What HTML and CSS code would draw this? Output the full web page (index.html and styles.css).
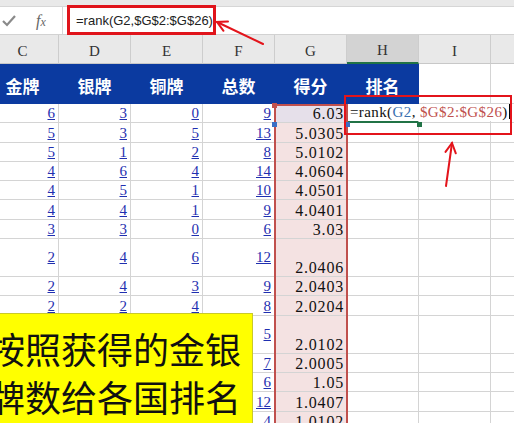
FILE: index.html
```html
<!DOCTYPE html>
<html lang="zh-CN">
<head>
    <meta charset="UTF-8">
    <title>rank 排名</title>
    <link rel="stylesheet" href="styles.css">
</head>
<body>
<div class="app">
    <div class="topstrip"></div>
    <div class="fbar">
        <div class="fb-icons">
            <svg class="check" width="14" height="12" viewBox="0 0 14 12"><polyline points="1,6 5,10 13,1" fill="none" stroke="#8a8a8a" stroke-width="2.2"/></svg>
            <span class="fx">f<span class="fx-x">x</span></span>
        </div>
        <div class="fb-input">
            <span class="fb-formula">=rank(G2,$G$2:$G$26)</span>
        </div>
    </div>

    <div class="sheet">
        <div class="row colhead">
            <div class="c">C</div><div class="c">D</div><div class="c">E</div><div class="c">F</div>
            <div class="c">G</div><div class="c sel">H</div><div class="c">I</div><div class="c"></div>
        </div>
        <div class="row titles">
            <div class="c t">金牌</div><div class="c t">银牌</div><div class="c t">铜牌</div><div class="c t">总数</div>
            <div class="c t">得分</div><div class="c t">排名</div><div class="c"></div><div class="c"></div>
        </div>

        <div class="row r">
            <div class="c n"><u>6</u></div><div class="c n"><u>3</u></div><div class="c n"><u>0</u></div><div class="c n"><u>9</u></div>
            <div class="c g active">6.03</div>
            <div class="c h2"><span class="edit">=rank(<span class="ref-b">G2</span>, <span class="ref-r">$G$2:$G$26</span>)<span class="caret"></span></span></div>
            <div class="c"></div><div class="c"></div>
        </div>
        <div class="row r">
            <div class="c n"><u>5</u></div><div class="c n"><u>3</u></div><div class="c n"><u>5</u></div><div class="c n"><u>13</u></div>
            <div class="c g">5.0305</div><div class="c"></div><div class="c"></div><div class="c"></div>
        </div>
        <div class="row r">
            <div class="c n"><u>5</u></div><div class="c n"><u>1</u></div><div class="c n"><u>2</u></div><div class="c n"><u>8</u></div>
            <div class="c g">5.0102</div><div class="c"></div><div class="c"></div><div class="c"></div>
        </div>
        <div class="row r">
            <div class="c n"><u>4</u></div><div class="c n"><u>6</u></div><div class="c n"><u>4</u></div><div class="c n"><u>14</u></div>
            <div class="c g">4.0604</div><div class="c"></div><div class="c"></div><div class="c"></div>
        </div>
        <div class="row r">
            <div class="c n"><u>4</u></div><div class="c n"><u>5</u></div><div class="c n"><u>1</u></div><div class="c n"><u>10</u></div>
            <div class="c g">4.0501</div><div class="c"></div><div class="c"></div><div class="c"></div>
        </div>
        <div class="row r">
            <div class="c n"><u>4</u></div><div class="c n"><u>4</u></div><div class="c n"><u>1</u></div><div class="c n"><u>9</u></div>
            <div class="c g">4.0401</div><div class="c"></div><div class="c"></div><div class="c"></div>
        </div>
        <div class="row r">
            <div class="c n"><u>3</u></div><div class="c n"><u>3</u></div><div class="c n"><u>0</u></div><div class="c n"><u>6</u></div>
            <div class="c g">3.03</div><div class="c"></div><div class="c"></div><div class="c"></div>
        </div>
        <div class="row r tall">
            <div class="c n"><u>2</u></div><div class="c n"><u>4</u></div><div class="c n"><u>6</u></div><div class="c n"><u>12</u></div>
            <div class="c g">2.0406</div><div class="c"></div><div class="c"></div><div class="c"></div>
        </div>
        <div class="row r">
            <div class="c n"><u>2</u></div><div class="c n"><u>4</u></div><div class="c n"><u>3</u></div><div class="c n"><u>9</u></div>
            <div class="c g">2.0403</div><div class="c"></div><div class="c"></div><div class="c"></div>
        </div>
        <div class="row r">
            <div class="c n"><u>2</u></div><div class="c n"><u>2</u></div><div class="c n"><u>4</u></div><div class="c n"><u>8</u></div>
            <div class="c g">2.0204</div><div class="c"></div><div class="c"></div><div class="c"></div>
        </div>
        <div class="row r tall">
            <div class="c n"><u>2</u></div><div class="c n"><u>1</u></div><div class="c n"><u>2</u></div><div class="c n"><u>5</u></div>
            <div class="c g">2.0102</div><div class="c"></div><div class="c"></div><div class="c"></div>
        </div>
        <div class="row r">
            <div class="c n"><u>2</u></div><div class="c n"><u>0</u></div><div class="c n"><u>5</u></div><div class="c n"><u>7</u></div>
            <div class="c g">2.0005</div><div class="c"></div><div class="c"></div><div class="c"></div>
        </div>
        <div class="row r">
            <div class="c n"><u>1</u></div><div class="c n"><u>5</u></div><div class="c n"><u>0</u></div><div class="c n"><u>6</u></div>
            <div class="c g">1.05</div><div class="c"></div><div class="c"></div><div class="c"></div>
        </div>
        <div class="row r">
            <div class="c n"><u>1</u></div><div class="c n"><u>4</u></div><div class="c n"><u>7</u></div><div class="c n"><u>12</u></div>
            <div class="c g">1.0407</div><div class="c"></div><div class="c"></div><div class="c"></div>
        </div>
        <div class="row r">
            <div class="c n"><u>1</u></div><div class="c n"><u>1</u></div><div class="c n"><u>2</u></div><div class="c n"><u>4</u></div>
            <div class="c g">1.0102</div><div class="c"></div><div class="c"></div><div class="c"></div>
        </div>
    </div>

    <!-- range highlight of $G$2:$G$26 -->
    <div class="range-g"></div>
    <div class="hd hd-red" style="left:272px; top:103px"></div>
    <div class="hd hd-blue" style="left:272px; top:122px"></div>
    <div class="hd hd-blue" style="left:345px; top:122px"></div>
    <div class="hd hd-green" style="left:417px; top:122px"></div>

    <!-- annotations -->
    <div class="h2-box"></div>
    <div class="note">按照获得的金银<br>牌数给各国排名</div>
    <svg class="arrows" width="514" height="423" viewBox="0 0 514 423">
        <g stroke="#e3141b" stroke-width="2" fill="none" stroke-linecap="round">
            <line x1="263" y1="44" x2="217" y2="22"/>
            <polyline points="223.5,30.8 217,22 228,21.5"/>
            <line x1="446" y1="186" x2="452" y2="143"/>
            <polyline points="445.5,151.9 452,143 455.8,153.3"/>
        </g>
    </svg>
</div>
</body>
</html>
```

FILE: styles.css
```css
* {
    box-sizing: border-box;
}
body {
    margin: 0;
    width: 514px;
    height: 423px;
    overflow: hidden;
    background: #fff;
    font-family: "Liberation Serif", serif;
}
.app {
    position: relative;
    width: 514px;
    height: 423px;
    overflow: hidden;
}

/* formula bar */
.topstrip {
    height: 7px;
    background: #e9e9e9;
    border-bottom: 1px solid #d6d6d6;
}
.fbar {
    display: flex;
    height: 28px;
    border-bottom: 1px solid #d2d2d2;
}
.fb-icons {
    width: 63px;
    display: flex;
    align-items: center;
    padding-left: 2px;
    border-right: 1px solid #d6d6d6;
}
.check {
    margin-top: 1px;
}
.fx {
    margin-left: 20px;
    font-style: italic;
    font-size: 16px;
    color: #666;
}
.fx-x {
    font-size: 12px;
}
.fb-input {
    flex: 1;
    padding-left: 4px;
    display: flex;
}
.fb-formula {
    width: 149px;
    height: 30px;
    margin-top: -2px;
    border: 3px solid #e0141b;
    padding-left: 6px;
    display: flex;
    align-items: center;
    font: 13px "Liberation Sans", Arial, sans-serif;
    color: #222;
}

/* sheet grid */
.sheet {
    margin-left: -13px;
}
.row {
    display: grid;
    grid-template-columns: repeat(7, 72px) 80px;
}
.c {
    display: flex;
    border-right: 1px solid #d4d4d4;
    border-bottom: 1px solid #d4d4d4;
}
.colhead {
    height: 29px;
    background: #e9e9e9;
}
.colhead .c {
    justify-content: center;
    align-items: flex-end;
    padding-bottom: 3px;
    font-size: 15px;
    color: #333;
    border-right-color: #cdcdcd;
    border-bottom-color: #c8c8c8;
}
.colhead .c.sel {
    background: #d3d3d3;
    border-bottom: 2px solid #217346;
}
.titles {
    height: 40px;
}
.titles .c.t {
    background: #0b3aa0;
    border-color: #0b3aa0;
    color: #fff;
    justify-content: center;
    align-items: center;
    padding-top: 3px;
    font: bold 17px "Noto Sans CJK SC", sans-serif;
}
.r {
    height: 19.3px;
}
.r.tall {
    height: 38px;
}
.r .c {
    align-items: flex-end;
    line-height: 17px;
}
.n {
    justify-content: flex-end;
    padding-right: 3px;
    font-size: 15px;
    color: #1f2fb0;
}
.r.tall .n {
    align-items: center;
}
.g {
    justify-content: flex-end;
    padding-right: 2px;
    font-size: 16px;
    letter-spacing: 0.8px;
    color: #111;
    background: #f4e2e2;
}
.g.active {
    background: #e6e0ea;
}
.h2 {
    overflow: visible;
    white-space: nowrap;
    padding-left: 3px;
    border-bottom: 2px solid #217346;
}
.edit {
    position: relative;
    z-index: 1;
    background: #fff;
    font-size: 15px;
    letter-spacing: 0.4px;
    color: #111;
    padding-right: 2px;
}
.ref-b {
    color: #3a6fb0;
}
.ref-r {
    color: #c0504d;
}
.caret {
    display: inline-block;
    width: 1px;
    height: 15px;
    margin-left: 1px;
    vertical-align: -2px;
    background: #000;
}

/* overlays */
.range-g {
    position: absolute;
    left: 274px;
    top: 104px;
    width: 74px;
    height: 330px;
    border: 2px solid #c0504d;
    border-bottom: none;
}
.hd {
    position: absolute;
    width: 5px;
    height: 5px;
}
.hd-red { background: #c0504d; }
.hd-blue { background: #3a6fc4; }
.hd-green { background: #217346; }
.h2-box {
    position: absolute;
    left: 344px;
    top: 95px;
    width: 168px;
    height: 40px;
    border: 2px solid #e3141b;
    z-index: 2;
}
.note {
    position: absolute;
    left: -14px;
    top: 313px;
    width: 267px;
    height: 120px;
    padding: 10px 0 0 2px;
    background: #ffff00;
    border: 1px solid #c9c92a;
    font: 36px/48px "Noto Sans CJK SC", sans-serif;
    color: #111;
    white-space: nowrap;
    z-index: 3;
}
.arrows {
    position: absolute;
    left: 0;
    top: 0;
    pointer-events: none;
    z-index: 4;
}
```
